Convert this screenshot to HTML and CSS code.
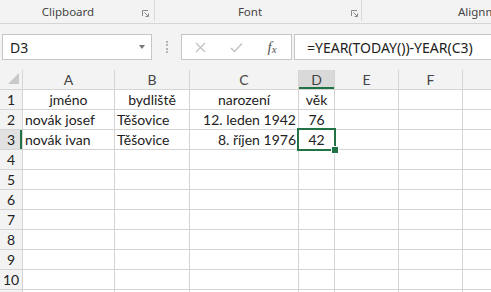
FILE: index.html
```html
<!DOCTYPE html>
<html lang="cs">

<head>
    <meta charset="UTF-8">
    <title>Sešit1 - Excel</title>
    <link rel="stylesheet" href="styles.css">
</head>

<body>
    <div class="ribbon">
        <div class="group group-clipboard">
            <span class="label">Clipboard</span>
            <svg class="launcher" width="7" height="7" viewBox="0 0 7 7">
                <path d="M0.5 6V0.5H6" fill="none" stroke="#8a8a8a" />
                <path d="M2.5 2.5L6.5 6.5M3.5 6.5H6.5V3.5" fill="none" stroke="#8a8a8a" />
            </svg>
        </div>
        <div class="group group-font">
            <span class="label">Font</span>
            <svg class="launcher" width="7" height="7" viewBox="0 0 7 7">
                <path d="M0.5 6V0.5H6" fill="none" stroke="#8a8a8a" />
                <path d="M2.5 2.5L6.5 6.5M3.5 6.5H6.5V3.5" fill="none" stroke="#8a8a8a" />
            </svg>
        </div>
        <div class="group group-align">
            <span class="label">Alignment</span>
        </div>
    </div>

    <div class="formula-bar">
        <div class="name-box">
            <span>D3</span>
            <span class="arrow"></span>
        </div>
        <div class="grip"><span></span></div>
        <div class="fx-box">
            <span class="fx-btn">
                <svg width="11" height="11" viewBox="0 0 11 11">
                    <path d="M1 1L10 10M10 1L1 10" stroke="#c2c2c2" stroke-width="1.3" />
                </svg>
            </span>
            <span class="fx-btn">
                <svg width="13" height="11" viewBox="0 0 13 11">
                    <path d="M1 6L4.5 9.5L12 1.5" fill="none" stroke="#c2c2c2" stroke-width="1.5" />
                </svg>
            </span>
            <span class="fx-btn fx">f<small>x</small></span>
        </div>
        <div class="formula">=YEAR(TODAY())-YEAR(C3)</div>
    </div>

    <div class="sheet">
        <div class="hd corner"><span class="select-all"></span></div>
        <div class="hd">A</div>
        <div class="hd">B</div>
        <div class="hd">C</div>
        <div class="hd active-col">D</div>
        <div class="hd">E</div>
        <div class="hd">F</div>
        <div class="hd"></div>

        <div class="rh">1</div>
        <div class="cell center">jméno</div>
        <div class="cell center">bydliště</div>
        <div class="cell center">narození</div>
        <div class="cell center">věk</div>
        <div class="cell"></div>
        <div class="cell"></div>
        <div class="cell"></div>

        <div class="rh">2</div>
        <div class="cell">novák josef</div>
        <div class="cell">Těšovice</div>
        <div class="cell right">12. leden 1942</div>
        <div class="cell center">76</div>
        <div class="cell"></div>
        <div class="cell"></div>
        <div class="cell"></div>

        <div class="rh active-row">3</div>
        <div class="cell">novák ivan</div>
        <div class="cell">Těšovice</div>
        <div class="cell right">8. říjen 1976</div>
        <div class="cell center selected">42</div>
        <div class="cell"></div>
        <div class="cell"></div>
        <div class="cell"></div>

        <div class="rh">4</div>
        <div class="cell"></div><div class="cell"></div><div class="cell"></div><div class="cell"></div>
        <div class="cell"></div><div class="cell"></div><div class="cell"></div>

        <div class="rh">5</div>
        <div class="cell"></div><div class="cell"></div><div class="cell"></div><div class="cell"></div>
        <div class="cell"></div><div class="cell"></div><div class="cell"></div>

        <div class="rh">6</div>
        <div class="cell"></div><div class="cell"></div><div class="cell"></div><div class="cell"></div>
        <div class="cell"></div><div class="cell"></div><div class="cell"></div>

        <div class="rh">7</div>
        <div class="cell"></div><div class="cell"></div><div class="cell"></div><div class="cell"></div>
        <div class="cell"></div><div class="cell"></div><div class="cell"></div>

        <div class="rh">8</div>
        <div class="cell"></div><div class="cell"></div><div class="cell"></div><div class="cell"></div>
        <div class="cell"></div><div class="cell"></div><div class="cell"></div>

        <div class="rh">9</div>
        <div class="cell"></div><div class="cell"></div><div class="cell"></div><div class="cell"></div>
        <div class="cell"></div><div class="cell"></div><div class="cell"></div>

        <div class="rh">10</div>
        <div class="cell"></div><div class="cell"></div><div class="cell"></div><div class="cell"></div>
        <div class="cell"></div><div class="cell"></div><div class="cell"></div>

        <div class="rh"></div>
        <div class="cell"></div><div class="cell"></div><div class="cell"></div><div class="cell"></div>
        <div class="cell"></div><div class="cell"></div><div class="cell"></div>
    </div>
</body>

</html>
```

FILE: styles.css
```css
* {
    box-sizing: border-box;
}

body {
    margin: 0;
    width: 491px;
    height: 292px;
    overflow: hidden;
    background: #fff;
    font-family: "Noto Sans", sans-serif;
    color: #222;
}

/* ribbon bottom strip */
.ribbon {
    display: flex;
    height: 24px;
    background: #f3f3f3;
    border-bottom: 1px solid #d5d5d5;
    overflow: hidden;
}

.group {
    display: flex;
    align-items: flex-end;
    flex-shrink: 0;
    height: 21px;
    padding-bottom: 2px;
    border-right: 1px solid #d9d9d9;
    font-size: 11.5px;
    color: #444;
}

.group .label {
    line-height: 14px;
    text-align: center;
}

.launcher {
    margin-bottom: 2px;
}

.group-clipboard {
    width: 155px;
}

.group-clipboard .label {
    width: 136px;
    margin-right: 6px;
}

.group-font {
    width: 207px;
}

.group-font .label {
    width: 190px;
    margin-right: 6px;
}

.group-align {
    flex: 1 0 auto;
    border-right: none;
    padding-left: 96px;
    white-space: nowrap;
}

/* name box + formula */
.formula-bar {
    display: flex;
    align-items: center;
    height: 46px;
    padding-left: 2px;
    background: #f3f3f3;
}

.name-box {
    display: flex;
    align-items: center;
    width: 150px;
    height: 26px;
    padding: 0 6px 0 7px;
    background: #fff;
    border: 1px solid #c6c6c6;
    font-size: 14px;
}

.arrow {
    margin-left: auto;
    border-top: 4px solid #777;
    border-left: 3.5px solid transparent;
    border-right: 3.5px solid transparent;
}

.grip {
    display: flex;
    justify-content: center;
    width: 29px;
}

.grip span {
    height: 12px;
    border-left: 2px dotted #b5b5b5;
}

.fx-box {
    display: flex;
    align-items: center;
    width: 111px;
    height: 26px;
    background: #fff;
    border: 1px solid #c6c6c6;
}

.fx-btn {
    display: flex;
    align-items: center;
    justify-content: center;
    width: 36px;
    height: 100%;
}

.fx {
    font-family: "Liberation Serif", serif;
    font-style: italic;
    font-size: 15px;
    color: #555;
}

.fx small {
    font-size: 11px;
    margin-top: 3px;
}

.formula {
    display: flex;
    align-items: center;
    flex: 1;
    height: 26px;
    margin-left: 2px;
    padding-left: 12px;
    background: #fff;
    border: 1px solid #c6c6c6;
    border-right: none;
    font-size: 14px;
    white-space: nowrap;
}

/* worksheet grid */
.sheet {
    display: grid;
    grid-template-columns: 22px 91px 74px 108px 35px 63px 63px 1fr;
    grid-auto-rows: 19px;
    gap: 1px;
    background: #d4d4d4;
    font-family: Lato, sans-serif;
    font-size: 14px;
    line-height: 19px;
}

.hd,
.rh {
    background: #f3f3f3;
    color: #444;
    text-align: center;
}

.rh {
    color: #222;
}

.corner {
    position: relative;
}

.select-all {
    position: absolute;
    right: 3px;
    bottom: 5px;
    border-bottom: 11px solid #c9c9c9;
    border-left: 11px solid transparent;
}

.active-col {
    background: #d9d9d9;
    box-shadow: inset 0 -2px 0 #217346;
}

.active-row {
    background: #e1e1e1;
    box-shadow: inset -2px 0 0 #217346;
}

.cell {
    background: #fff;
    padding: 0 2px;
    white-space: nowrap;
}

.center {
    text-align: center;
}

.right {
    text-align: right;
}

.selected {
    position: relative;
}

.selected::before {
    content: "";
    position: absolute;
    inset: -2px;
    border: 2px solid #217346;
}

.selected::after {
    content: "";
    position: absolute;
    right: -5px;
    bottom: -5px;
    width: 6px;
    height: 6px;
    background: #217346;
    border: 1px solid #fff;
}
```
